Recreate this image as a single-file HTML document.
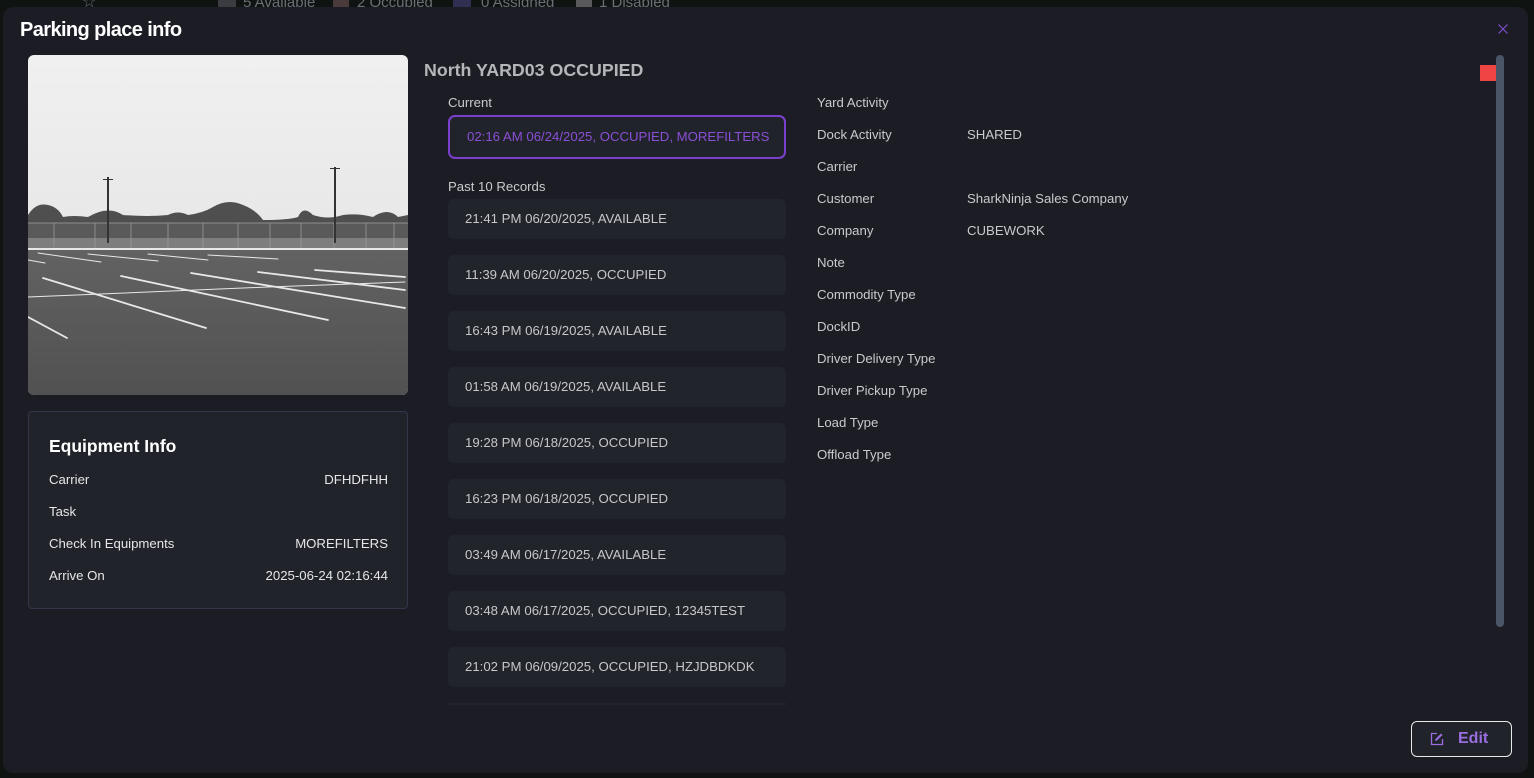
<!DOCTYPE html>
<html><head><meta charset="utf-8"><style>
*{margin:0;padding:0;box-sizing:border-box}
body{width:1534px;height:778px;background:#0f1312;font-family:"Liberation Sans",sans-serif;overflow:hidden;position:relative}
.a{position:absolute}
.top{top:-6px;font-size:15px;color:#6b6e73;white-space:nowrap}
.modal{left:3px;top:7px;width:1525px;height:766px;background:#1c1d24;border-radius:10px}
.t{color:#c9cacc;font-size:13.2px;white-space:nowrap;letter-spacing:0}
.rec{left:448px;width:338px;height:40px;background:#22242b;border-radius:6px;color:#c6c7c9;font-size:13.2px;padding:12px 0 0 17px;white-space:nowrap}
</style></head><body>
<div class="a" style="left:218px;width:18px;height:8px;top:0;background:#3a3c40"></div>
<div class="a top" style="left:243px">5 Available</div>
<div class="a" style="left:333px;top:0;width:16px;height:8px;background:#4a3a3c"></div>
<div class="a top" style="left:357px">2 Occupied</div>
<div class="a" style="left:453px;top:0;width:18px;height:8px;background:#2f2f52"></div>
<div class="a top" style="left:481px">0 Assigned</div>
<div class="a" style="left:576px;top:0;width:16px;height:8px;background:#5a5a5c"></div>
<div class="a top" style="left:599px">1 Disabled</div>
<div class="a top" style="left:82px;top:-8px;font-size:16px">☆</div>
<div class="a modal"></div>
<div class="a" style="left:20px;top:19px;font-size:20px;font-weight:bold;color:#fff;letter-spacing:-0.6px">Parking place info</div>
<svg class="a" style="left:1497px;top:23px" width="12" height="12" viewBox="0 0 12 12"><path d="M1.5 1.5L10.5 10.5M10.5 1.5L1.5 10.5" stroke="#7c4fd1" stroke-width="1.2"/></svg>
<div class="a" style="left:1496px;top:55px;width:8px;height:572px;background:#4b5568;border-radius:4px"></div>
<div class="a" style="left:1480px;top:65px;width:16px;height:16px;background:#ef4444"></div>
<svg class="a" style="left:28px;top:55px;border-radius:6px" width="380" height="340" viewBox="0 0 380 340">
<defs><linearGradient id="s" x1="0" y1="0" x2="0" y2="1"><stop offset="0" stop-color="#f0f0f0"/><stop offset="1" stop-color="#e0e0e0"/></linearGradient>
<linearGradient id="g" x1="0" y1="0" x2="0" y2="1"><stop offset="0" stop-color="#626262"/><stop offset="1" stop-color="#515151"/></linearGradient></defs>
<rect width="380" height="340" fill="url(#s)"/>
<path d="M0 160 Q8 147 20 150 Q30 152 35 162 Q45 160 60 162 Q80 150 95 160 Q120 162 140 160 Q150 155 160 160 Q175 158 185 152 Q200 143 215 150 Q228 155 235 165 Q260 165 270 162 Q275 150 285 160 Q300 165 315 160 Q330 158 345 162 Q360 152 370 162 L380 160 L380 195 L0 195Z" fill="#4f4f4f"/>
<rect x="0" y="168" width="380" height="27" fill="#5a5a5a"/>
<rect x="0" y="183" width="380" height="12" fill="#7e7e7e"/>
<line x1="0" y1="168" x2="380" y2="168" stroke="#a0a0a0" stroke-width="0.7"/>
<g stroke="#999" stroke-width="0.8"><path d="M26 168V192M67 168V193M103 168V193M140 168V193M175 168V193M210 168V193M242 168V193M273 168V193M306 168V193M338 168V193M366 168V193"/></g>
<rect x="79" y="122" width="2" height="66" fill="#333"/><rect x="306" y="112" width="2" height="76" fill="#333"/>
<rect x="75" y="124" width="10" height="1" fill="#333"/><rect x="302" y="113" width="10" height="1" fill="#333"/>
<rect x="0" y="195" width="380" height="145" fill="url(#g)"/>
<rect x="0" y="193" width="380" height="2" fill="#e8e8e8"/>
<g stroke="#e8e8e8" stroke-width="1.8" fill="none" stroke-linecap="round">
<path d="M15 223L178 273M0 262L39 283M93 221L300 265M163 218L377 253M230 217L377 235M287 215L377 222"/>
<path d="M0 242L240 232L377 227M0 205L17 208M10 198L73 207M60 199L130 206M120 199L180 205M180 200L250 204" stroke-width="1"/>
</g>
</svg>
<div class="a" style="left:28px;top:411px;width:380px;height:198px;background:#21232a;border:1px solid #33354a;border-radius:4px"></div>
<div class="a" style="left:49px;top:436px;font-size:17.5px;font-weight:bold;color:#fff">Equipment Info</div>
<div class="a t" style="left:49px;top:472px;color:#e6e6e6">Carrier</div><div class="a t" style="right:1146px;top:472px;color:#e6e6e6">DFHDFHH</div>
<div class="a t" style="left:49px;top:504px;color:#e6e6e6">Task</div>
<div class="a t" style="left:49px;top:536px;color:#e6e6e6">Check In Equipments</div><div class="a t" style="right:1146px;top:536px;color:#e6e6e6">MOREFILTERS</div>
<div class="a t" style="left:49px;top:568px;color:#e6e6e6">Arrive On</div><div class="a t" style="right:1146px;top:568px;color:#e6e6e6">2025-06-24 02:16:44</div>
<div class="a" style="left:424px;top:60px;font-size:17.8px;font-weight:bold;color:#b5b6b9">North YARD03 OCCUPIED</div>
<div class="a t" style="left:448px;top:95px">Current</div>
<div class="a" style="left:448px;top:115px;width:338px;height:44px;border:2px solid #7b3fce;border-radius:7px;background:#21232a;color:#8a4fd6;font-size:13.2px;padding:12px 0 0 17px;white-space:nowrap">02:16 AM 06/24/2025, OCCUPIED, MOREFILTERS</div>
<div class="a t" style="left:448px;top:179px">Past 10 Records</div>
<div class="a rec" style="top:199px">21:41 PM 06/20/2025, AVAILABLE</div>
<div class="a rec" style="top:255px">11:39 AM 06/20/2025, OCCUPIED</div>
<div class="a rec" style="top:311px">16:43 PM 06/19/2025, AVAILABLE</div>
<div class="a rec" style="top:367px">01:58 AM 06/19/2025, AVAILABLE</div>
<div class="a rec" style="top:423px">19:28 PM 06/18/2025, OCCUPIED</div>
<div class="a rec" style="top:479px">16:23 PM 06/18/2025, OCCUPIED</div>
<div class="a rec" style="top:535px">03:49 AM 06/17/2025, AVAILABLE</div>
<div class="a rec" style="top:591px">03:48 AM 06/17/2025, OCCUPIED, 12345TEST</div>
<div class="a rec" style="top:647px">21:02 PM 06/09/2025, OCCUPIED, HZJDBDKDK</div>
<div class="a" style="left:448px;top:703px;width:338px;height:2px;background:#22242b"></div>
<div class="a t" style="left:817px;top:95px">Yard Activity</div>
<div class="a t" style="left:817px;top:127px">Dock Activity</div><div class="a t" style="left:967px;top:127px">SHARED</div>
<div class="a t" style="left:817px;top:159px">Carrier</div>
<div class="a t" style="left:817px;top:191px">Customer</div><div class="a t" style="left:967px;top:191px">SharkNinja Sales Company</div>
<div class="a t" style="left:817px;top:223px">Company</div><div class="a t" style="left:967px;top:223px">CUBEWORK</div>
<div class="a t" style="left:817px;top:255px">Note</div>
<div class="a t" style="left:817px;top:287px">Commodity Type</div>
<div class="a t" style="left:817px;top:319px">DockID</div>
<div class="a t" style="left:817px;top:351px">Driver Delivery Type</div>
<div class="a t" style="left:817px;top:383px">Driver Pickup Type</div>
<div class="a t" style="left:817px;top:415px">Load Type</div>
<div class="a t" style="left:817px;top:447px">Offload Type</div>
<div class="a" style="left:1411px;top:721px;width:101px;height:36px;border:1px solid #e8e8e8;border-radius:6px;background:#21232a"></div>
<svg class="a" style="left:1430px;top:732px" width="14" height="14" viewBox="0 0 14 14"><path d="M7 1.5H1.5V12.5H12.5V7" stroke="#9a6ee0" stroke-width="1.3" fill="none"/><path d="M5 9L5.5 7L11 1.5L12.5 3L7 8.5Z" fill="#9a6ee0"/></svg>
<div class="a" style="left:1458px;top:730px;font-size:16px;font-weight:bold;color:#9a6ee0">Edit</div>
</body></html>
